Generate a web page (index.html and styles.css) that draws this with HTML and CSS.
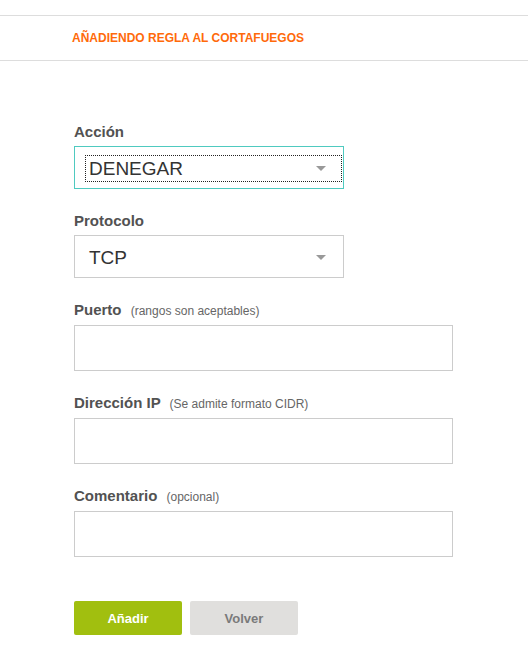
FILE: index.html
```
<!DOCTYPE html>
<html lang="es">
<head>
<meta charset="utf-8">
<title>Añadiendo regla al cortafuegos</title>
<link rel="stylesheet" href="styles.css">
</head>
<body>
<header class="bar">
  <h1 class="title">AÑADIENDO REGLA AL CORTAFUEGOS</h1>
</header>
<form class="form">
  <div class="field">
    <label class="label">Acción</label>
    <div class="select select-focus">
      <div class="value"><span>DENEGAR</span><i class="arrow"></i></div>
    </div>
  </div>
  <div class="field">
    <label class="label">Protocolo</label>
    <div class="select">
      <div class="value"><span>TCP</span><i class="arrow"></i></div>
    </div>
  </div>
  <div class="field">
    <label class="label">Puerto <span class="hint">(rangos son aceptables)</span></label>
    <input class="input" type="text">
  </div>
  <div class="field">
    <label class="label">Dirección IP <span class="hint">(Se admite formato CIDR)</span></label>
    <input class="input" type="text">
  </div>
  <div class="field field-last">
    <label class="label">Comentario <span class="hint">(opcional)</span></label>
    <input class="input" type="text">
  </div>
  <div class="actions">
    <button type="button" class="btn btn-primary">Añadir</button>
    <button type="button" class="btn btn-secondary">Volver</button>
  </div>
</form>
</body>
</html>
```
FILE: styles.css
```
html, body {
  margin: 0;
  padding: 0;
  background: #fff;
  font-family: "Liberation Sans", Arial, sans-serif;
}

.bar {
  margin-top: 15px;
  border-top: 1px solid #dddddd;
  border-bottom: 1px solid #dddddd;
  height: 44px;
  display: flex;
  align-items: center;
  padding-left: 72px;
}

.title {
  margin: 0;
  font-size: 12px;
  font-weight: bold;
  color: #ff6a0a;
  line-height: 16px;
}

.form {
  padding: 61px 0 0 74px;
}

.field {
  display: flex;
  flex-direction: column;
  align-items: flex-start;
  margin-bottom: 22px;
}

.field-last {
  margin-bottom: 21px;
}

.label {
  font-size: 15px;
  font-weight: bold;
  color: #525252;
  line-height: 20px;
  margin-bottom: 4px;
}

.hint {
  font-size: 12px;
  font-weight: normal;
  color: #666;
  margin-left: 5px;
}

.select {
  box-sizing: border-box;
  width: 270px;
  height: 43px;
  border: 1px solid #cccccc;
  padding: 8px 1px 6px 10px;
  display: flex;
}

.select-focus {
  border-color: #4fcac0;
}

.value {
  flex: 1;
  display: flex;
  align-items: center;
  border: 1px dotted transparent;
  padding: 0 15px 0 3px;
  font-size: 19px;
  color: #333;
}

.select-focus .value {
  border-color: #222;
}

.arrow {
  margin-left: auto;
  width: 0;
  height: 0;
  border-left: 5px solid transparent;
  border-right: 5px solid transparent;
  border-top: 5px solid #999;
}

.input {
  box-sizing: border-box;
  width: 379px;
  height: 46px;
  border: 1px solid #cccccc;
  margin: 0;
  padding: 0 10px;
  font-family: inherit;
  font-size: 14px;
  background: #fff;
}

.actions {
  display: flex;
  gap: 8px;
  padding-top: 23px;
}

.btn {
  width: 108px;
  height: 34px;
  border: 0;
  border-radius: 2px;
  font-family: inherit;
  font-size: 13px;
  font-weight: bold;
  padding: 0;
}

.btn-primary {
  background: #a1bf0f;
  color: #fff;
}

.btn-secondary {
  background: #e0dfdd;
  color: #7a7a7a;
}
```
